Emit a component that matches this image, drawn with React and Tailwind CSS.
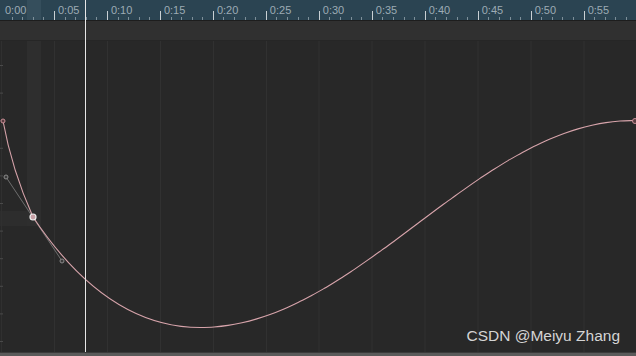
import React from "react";

const labels = ["0:00", "0:05", "0:10", "0:15", "0:20", "0:25", "0:30", "0:35", "0:40", "0:45", "0:50", "0:55"];
const majors = [54, 107, 160, 213, 266, 318.5, 371.5, 424.5, 477.5, 530.5, 583.5];

function curvePath() {
  // first segment + the dip, then a smooth rise to the last key
  let d = "M3 121 Q12 170 33 217 C71 274 125 327.5 200 327.5";
  const pts = [];
  for (let x = 200; x <= 634; x += 14) {
    pts.push([x, 224 + 103.5 * Math.cos((Math.PI * (x - 200)) / 434)]);
  }
  pts.push([634, 120.5]);
  for (let i = 0; i < pts.length - 1; i++) {
    const p0 = pts[i - 1] || [pts[i][0] - 14, pts[i][1]];
    const p1 = pts[i];
    const p2 = pts[i + 1];
    const p3 = pts[i + 2] || [p2[0] + 14, p2[1]];
    const c1 = [p1[0] + (p2[0] - p0[0]) / 6, p1[1] + (p2[1] - p0[1]) / 6];
    const c2 = [p2[0] - (p3[0] - p1[0]) / 6, p2[1] - (p3[1] - p1[1]) / 6];
    d += ` C${c1[0].toFixed(1)} ${c1[1].toFixed(1)} ${c2[0].toFixed(1)} ${c2[1].toFixed(1)} ${p2[0].toFixed(1)} ${p2[1].toFixed(1)}`;
  }
  return d;
}

function RulerSegment({ label, first }) {
  return (
    <div className="flex h-full w-[52.97px] shrink-0">
      {[0, 1, 2, 3, 4].map((i) => (
        <div key={i} className="relative flex flex-1 items-end">
          {i === 0 ? (
            <>
              {!first && <div className="h-[9px] w-px bg-[#c9d0d4]" />}
              <span className="absolute left-[4px] top-[3px] text-[11px] leading-[14px] text-[#9dabb4] whitespace-nowrap">
                {label}
              </span>
            </>
          ) : (
            <div className="h-[3px] w-px bg-[#7d8f99]" />
          )}
        </div>
      ))}
    </div>
  );
}

export default function App() {
  const leftTicks = [];
  for (let y = 65.5; y < 350; y += 27.6) leftTicks.push(y);

  return (
    <div
      className="relative flex h-[356px] w-[636px] flex-col overflow-hidden bg-[#282828]"
      style={{ fontFamily: '"Liberation Sans", Arial, sans-serif' }}
    >
      {/* ruler */}
      <div className="relative flex h-[20px] shrink-0 bg-[#2b4452] pl-px">
        <div className="absolute left-[27px] top-0 h-full w-[14px] bg-[#354e5c]" />
        {labels.map((l, i) => (
          <RulerSegment key={l} label={l} first={i === 0} />
        ))}
      </div>
      <div className="h-px shrink-0 bg-[#1d1d1d]" />
      {/* channel band */}
      <div className="h-[19px] shrink-0 bg-[#303030]" />
      <div className="h-px shrink-0 bg-[#262626]" />

      {/* graph */}
      <div className="relative flex-1">
        <div className="absolute left-[27px] top-0 h-[185px] w-[14px] bg-[#2e2e2e]" />
        <div className="absolute left-0 top-[170px] h-[15px] w-[27px] bg-[#2d2d2d]" />
        <svg className="absolute inset-0" width="636" height="311" viewBox="0 41 636 311">
          <line x1="1.5" y1="41" x2="1.5" y2="352" stroke="#303030" strokeWidth="1" />
          {majors.map((x) => (
            <line key={x} x1={x + 0.5} y1="41" x2={x + 0.5} y2="352" stroke="#313131" strokeWidth="1" />
          ))}
          {leftTicks.map((y) => (
            <line key={y} x1="0" y1={y} x2="3" y2={y} stroke="#4a4a4a" strokeWidth="1" />
          ))}
          {/* handle line */}
          <line x1="6" y1="177" x2="62" y2="261" stroke="#6f6f6f" strokeWidth="1" />
          {/* curve */}
          <path d={curvePath()} fill="none" stroke="#d7a4ab" strokeWidth="1.1" />
          {/* handles */}
          <circle cx="6" cy="177" r="2" fill="#3a3a3a" stroke="#8a8a8a" strokeWidth="1" />
          <circle cx="62" cy="261" r="2" fill="#3a3a3a" stroke="#8a8a8a" strokeWidth="1" />
          {/* keyframes */}
          <circle cx="3" cy="121" r="2" fill="#5a3c40" stroke="#c98f97" strokeWidth="1" />
          <circle cx="33" cy="217" r="3" fill="#c7a0a6" stroke="#eeeeee" strokeWidth="1.2" />
          <circle cx="635" cy="121" r="2.5" fill="#5a3c40" stroke="#c98f97" strokeWidth="1" />
        </svg>
      </div>

      <div className="h-px shrink-0 bg-[#3a3a3a]" />
      <div className="h-[3px] shrink-0 bg-[#5a5a5a]" />

      {/* playhead */}
      <div className="absolute left-[85px] top-0 h-[352px] w-px bg-[#e6e6e6]" />

      {/* watermark */}
      <div className="absolute right-[16px] top-[326px] text-[15.5px] leading-[20px] text-[#d4d4d4]">
        CSDN @Meiyu Zhang
      </div>
    </div>
  );
}
